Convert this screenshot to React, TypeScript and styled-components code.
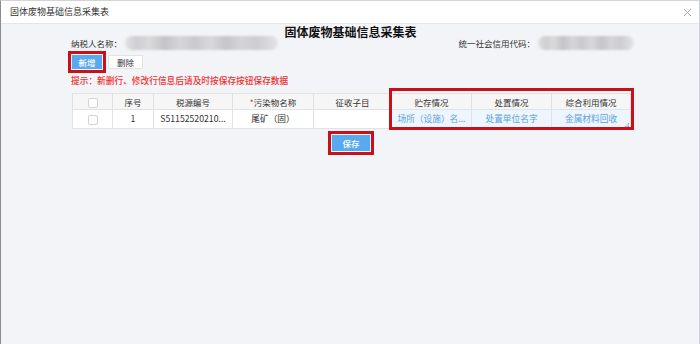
import React from "react";
import styled, { createGlobalStyle } from "styled-components";

const GlobalStyle = createGlobalStyle`
  html, body { margin: 0; padding: 0; width: 700px; height: 344px; overflow: hidden; background: #f3f4f8; }
  body { font-family: "Noto Sans CJK SC", "Microsoft YaHei", sans-serif; color: #333; }
  * { box-sizing: border-box; }
`;

const Window = styled.div`
  width: 700px;
  height: 344px;
  display: flex;
  flex-direction: column;
  border-left: 1px solid #8c8c8c;
  border-top: 1px solid #d4d4d4;
  border-right: 1px solid #c9d3de;
  background: #f3f4f8;
`;

const TitleBar = styled.div`
  height: 23px;
  flex: none;
  background: #fff;
  border-bottom: 1px solid #e6e6e6;
  display: flex;
  align-items: center;
  justify-content: space-between;
  padding: 0 7px 0 9px;
`;

const TitleText = styled.span`
  font-size: 9px;
  line-height: 12px;
  color: #333;
`;

const Body = styled.div`
  flex: 1;
  padding-left: 70px;
  display: flex;
  flex-direction: column;
  width: 629px;
`;

const Heading = styled.div`
  text-align: center;
  font-size: 12px;
  font-weight: 700;
  line-height: 12px;
  margin-top: 2px;
  color: #111;
`;

const InfoRow = styled.div`
  display: flex;
  justify-content: space-between;
  align-items: center;
  height: 14px;
  margin-top: -2px;
  margin-right: -4px;
`;

const InfoGroup = styled.div`
  display: flex;
  align-items: center;
`;

const Label = styled.span`
  font-size: 8.5px;
  line-height: 12px;
  color: #333;
  white-space: nowrap;
`;

const Blurred = styled.div<{ $w: number }>`
  width: ${(p) => p.$w}px;
  height: 14px;
  margin-left: 3px;
  border-radius: 7px;
  filter: blur(1.2px);
  background: linear-gradient(
    90deg,
    #e2e2e4 0%,
    #cfcfd2 8%,
    #dadadc 16%,
    #c4c4c7 26%,
    #d6d6d9 36%,
    #cacacd 46%,
    #d9d9dc 56%,
    #c6c6c9 66%,
    #d5d5d8 76%,
    #cdcdd0 86%,
    #e4e4e6 100%
  );
`;

const ButtonRow = styled.div`
  display: flex;
  align-items: center;
  gap: 2px;
  margin-top: 1px;
  margin-left: -3px;
`;

const Highlight = styled.div`
  border: 3px solid #c8101b;
  padding: 1px;
  display: inline-flex;
`;

const PrimaryButton = styled.button<{ $w: number; $h: number }>`
  width: ${(p) => p.$w}px;
  height: ${(p) => p.$h}px;
  border: none;
  padding: 0;
  background: #58aaf0;
  color: #fff;
  font-family: inherit;
  font-size: 8.5px;
  line-height: 12px;
  font-weight: 500;
`;

const PlainButton = styled.button`
  width: 35px;
  height: 14px;
  border: 1px solid #e3e3e3;
  padding: 0;
  background: #fff;
  color: #333;
  font-family: inherit;
  font-size: 8.5px;
  line-height: 12px;
`;

const Hint = styled.div`
  margin-top: 2px;
  font-size: 8.7px;
  line-height: 12px;
  color: #f12f2f;
  font-weight: 500;
  white-space: nowrap;
`;

const TableWrap = styled.div`
  position: relative;
  margin-top: 6px;
  margin-left: 1px;
  width: 558px;
`;

const Grid = styled.table`
  width: 558px;
  border-collapse: collapse;
  table-layout: fixed;
`;

const Th = styled.th`
  height: 16px;
  padding: 0;
  background: #f6f6f6;
  border: 1px solid #e2e2e2;
  font-size: 8.5px;
  line-height: 12px;
  font-weight: 400;
  color: #333;
  text-align: center;
`;

const Td = styled.td<{ $blue?: boolean }>`
  height: 19px;
  padding: 0 4px;
  background: ${(p) => (p.$blue ? "#edf5fd" : "#fff")};
  border: 1px solid #e2e2e2;
  font-size: 8.7px;
  line-height: 12px;
  color: ${(p) => (p.$blue ? "#5ba4e2" : "#333")};
  text-align: center;
  white-space: nowrap;
  overflow: hidden;
  position: relative;
`;

const Req = styled.span`
  color: #f03030;
`;

const Check = styled.span`
  display: inline-block;
  width: 10px;
  height: 10px;
  border: 1px solid #d4d4d4;
  border-radius: 2px;
  background: #fff;
  vertical-align: middle;
`;

const Grip = styled.svg`
  position: absolute;
  right: 1px;
  bottom: 1px;
`;

const ColumnMark = styled.div`
  position: absolute;
  left: 317px;
  top: -5px;
  width: 245px;
  height: 42px;
  border: 3px solid #c8101b;
  pointer-events: none;
`;

const SaveRow = styled.div`
  display: flex;
  justify-content: center;
  margin-top: 2px;
  width: 560px;
`;

const cols = [40, 41, 79, 81, 78, 80, 80, 79];

export default function App() {
  return (
    <>
      <GlobalStyle />
      <Window>
        <TitleBar>
          <TitleText>固体废物基础信息采集表</TitleText>
          <svg width="9" height="9" viewBox="0 0 9 9">
            <path d="M1 1 L8 8 M8 1 L1 8" stroke="#a8a8a8" strokeWidth="1" />
          </svg>
        </TitleBar>
        <Body>
          <Heading>固体废物基础信息采集表</Heading>
          <InfoRow>
            <InfoGroup>
              <Label>纳税人名称：</Label>
              <Blurred $w={153} />
            </InfoGroup>
            <InfoGroup>
              <Label>统一社会信用代码：</Label>
              <Blurred $w={96} />
            </InfoGroup>
          </InfoRow>
          <ButtonRow>
            <Highlight>
              <PrimaryButton $w={30} $h={14}>新增</PrimaryButton>
            </Highlight>
            <PlainButton>删除</PlainButton>
          </ButtonRow>
          <Hint>提示：新删行、修改行信息后请及时按保存按钮保存数据</Hint>
          <TableWrap>
            <Grid>
              <colgroup>
                {cols.map((w, i) => (
                  <col key={i} style={{ width: w }} />
                ))}
              </colgroup>
              <thead>
                <tr>
                  <Th><Check /></Th>
                  <Th>序号</Th>
                  <Th>税源编号</Th>
                  <Th><Req>*</Req>污染物名称</Th>
                  <Th>征收子目</Th>
                  <Th>贮存情况</Th>
                  <Th>处置情况</Th>
                  <Th>综合利用情况</Th>
                </tr>
              </thead>
              <tbody>
                <tr>
                  <Td><Check /></Td>
                  <Td>1</Td>
                  <Td>S51152520210...</Td>
                  <Td>尾矿（固）</Td>
                  <Td></Td>
                  <Td $blue>场所（设施）名...</Td>
                  <Td $blue>处置单位名字</Td>
                  <Td $blue>
                    金属材料回收
                    <Grip width="4" height="4" viewBox="0 0 4 4">
                      <rect x="3" y="0" width="1" height="1" fill="#999" />
                      <rect x="1.5" y="1.5" width="1" height="1" fill="#999" />
                      <rect x="3" y="1.5" width="1" height="1" fill="#999" />
                      <rect x="0" y="3" width="1" height="1" fill="#999" />
                      <rect x="1.5" y="3" width="1" height="1" fill="#999" />
                      <rect x="3" y="3" width="1" height="1" fill="#999" />
                    </Grip>
                  </Td>
                </tr>
              </tbody>
            </Grid>
            <ColumnMark />
          </TableWrap>
          <SaveRow>
            <Highlight>
              <PrimaryButton $w={38} $h={16}>保存</PrimaryButton>
            </Highlight>
          </SaveRow>
        </Body>
      </Window>
    </>
  );
}
